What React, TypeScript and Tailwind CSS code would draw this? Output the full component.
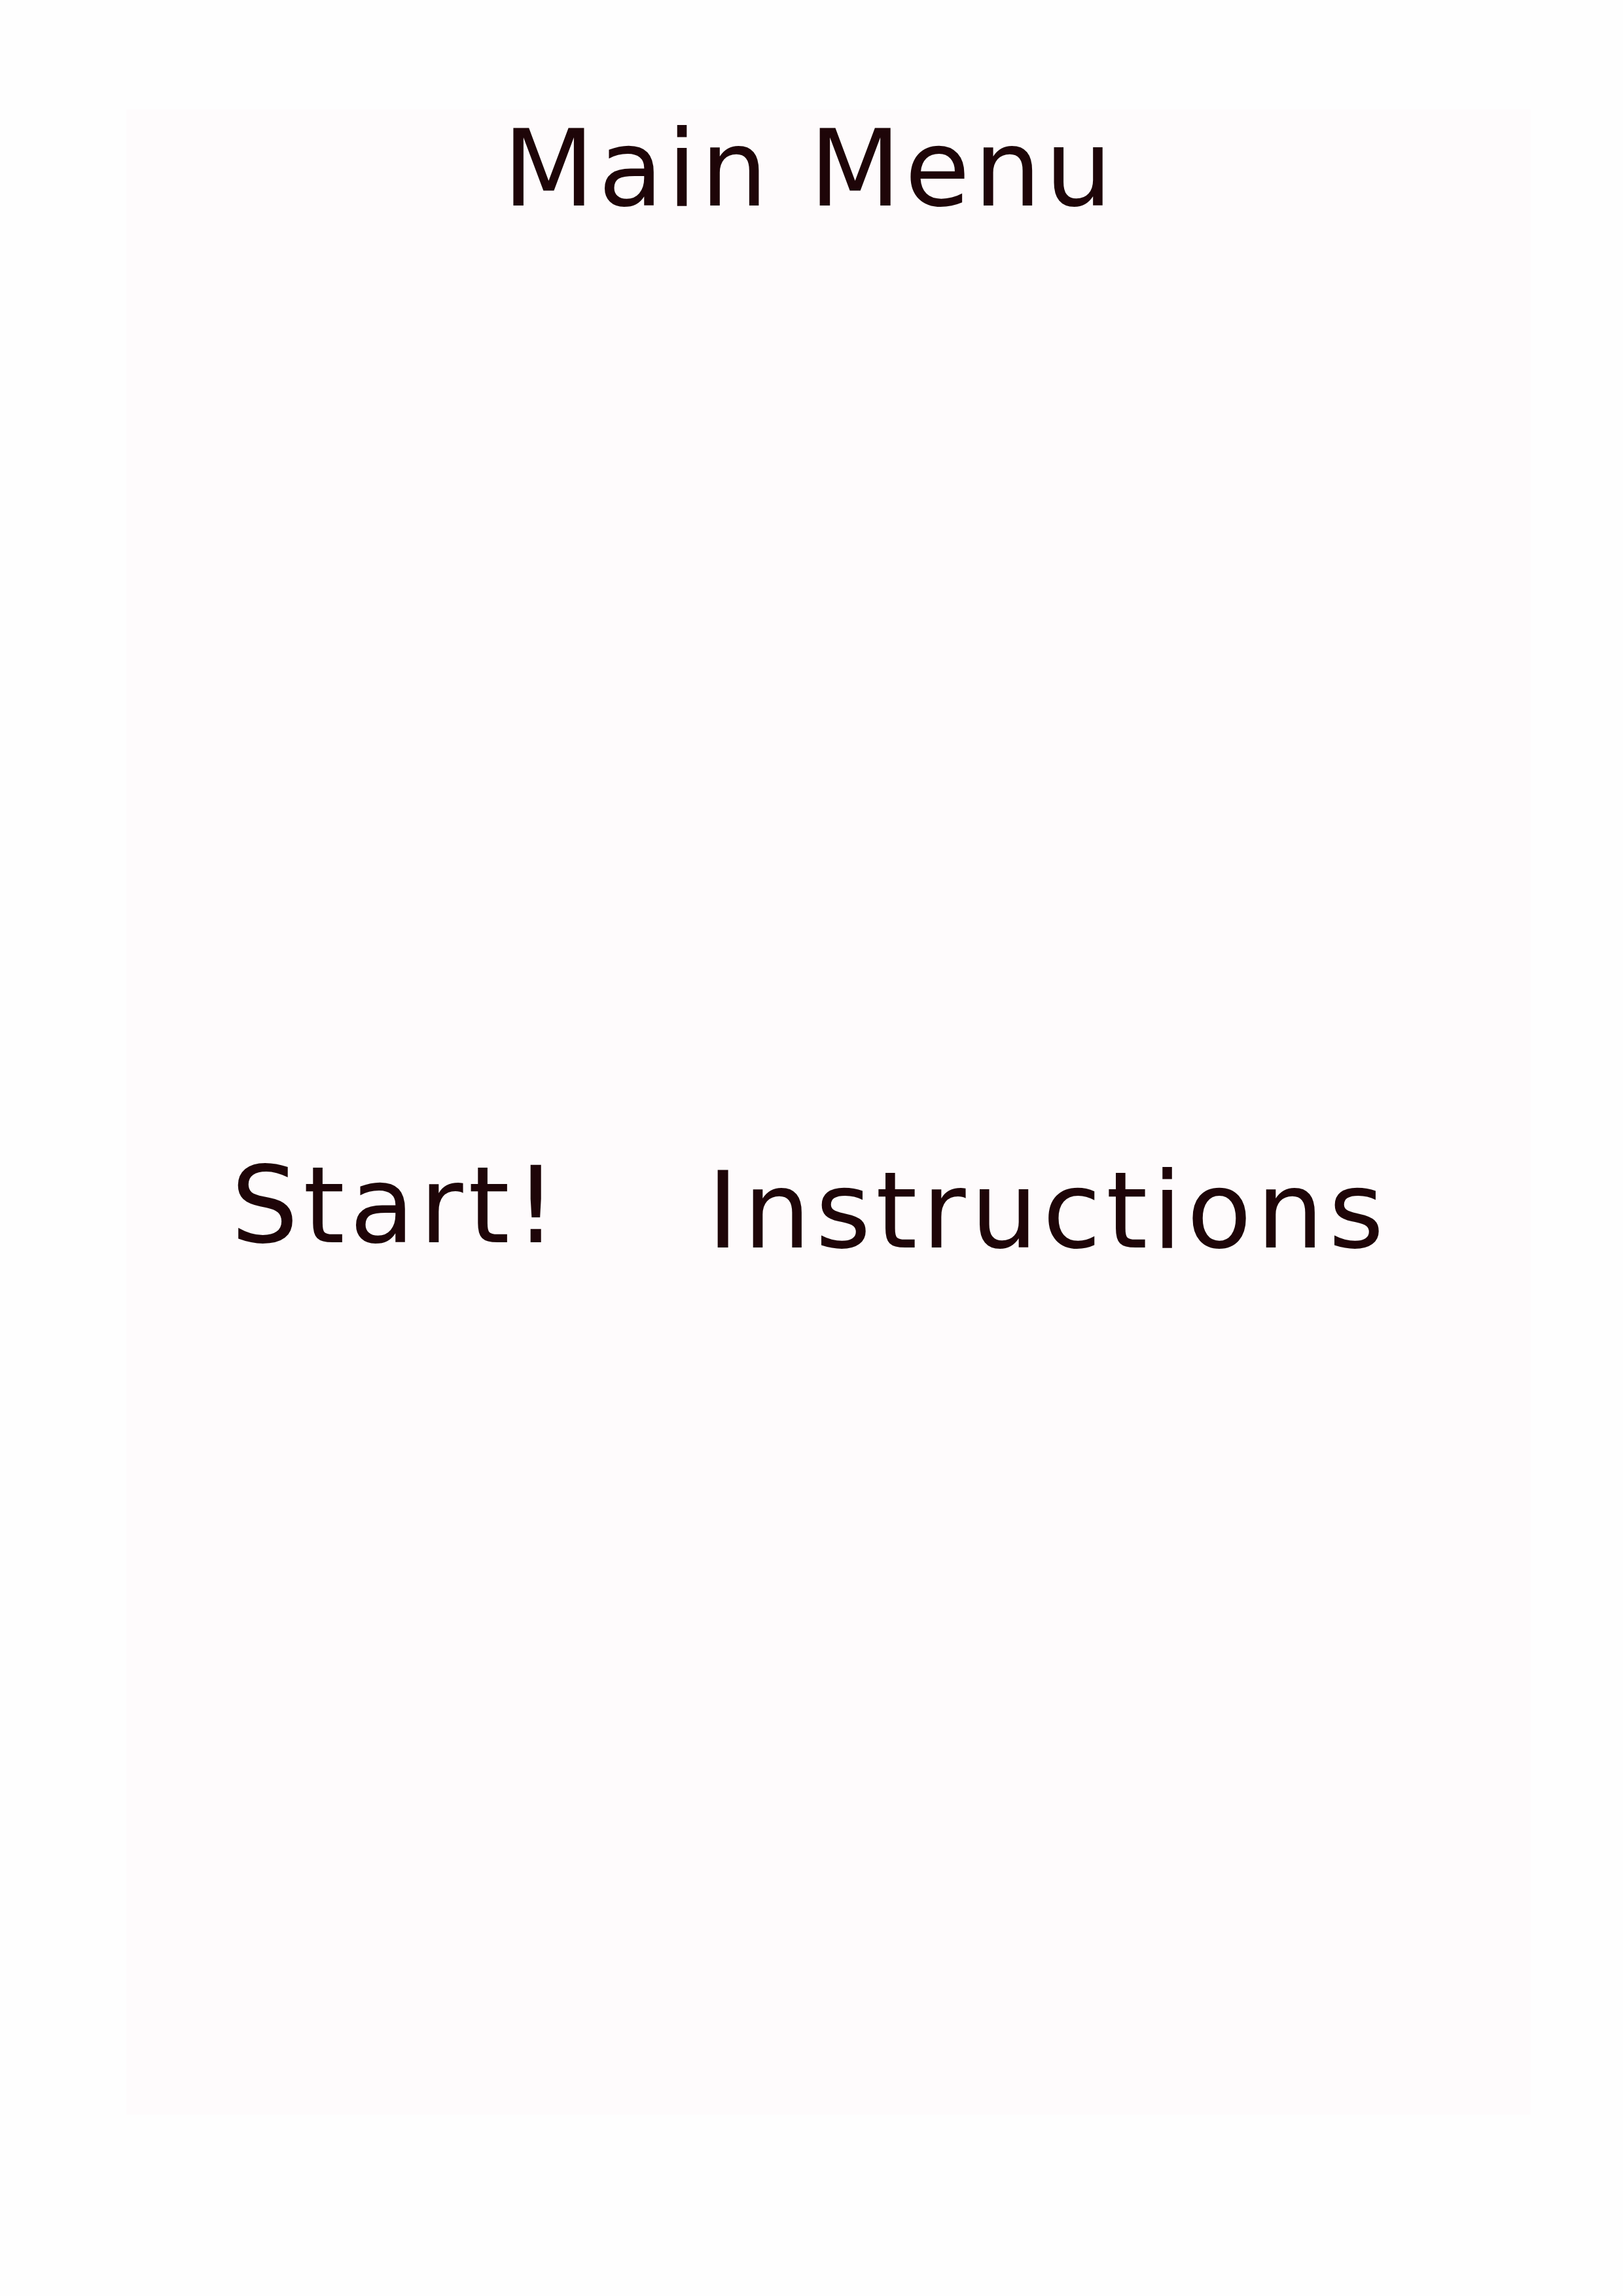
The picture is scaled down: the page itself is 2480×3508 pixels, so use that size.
export default function App() {
  return (
    <div className="min-h-[3508px] w-full bg-[#fefefe] pl-[193px] pt-[167px] font-['DejaVu_Sans',sans-serif] text-[#1e0508]">
      {/* menu panel */}
      <div className="flex h-[3064px] w-[2146px] flex-col bg-[#fefbfc]">
        <h1 className="-mt-[3px] pr-[58px] text-center text-[162px] font-normal leading-[188px] tracking-[6px]">
          Main Menu
        </h1>

        <div className="mt-[1396px] flex items-start gap-[222px] pl-[160px]">
          <button className="text-[162px] leading-[188px] tracking-[7.5px]">Start!</button>
          <button className="mt-[8px] text-[162px] leading-[188px] tracking-[7.5px]">Instructions</button>
        </div>
      </div>
    </div>
  );
}
